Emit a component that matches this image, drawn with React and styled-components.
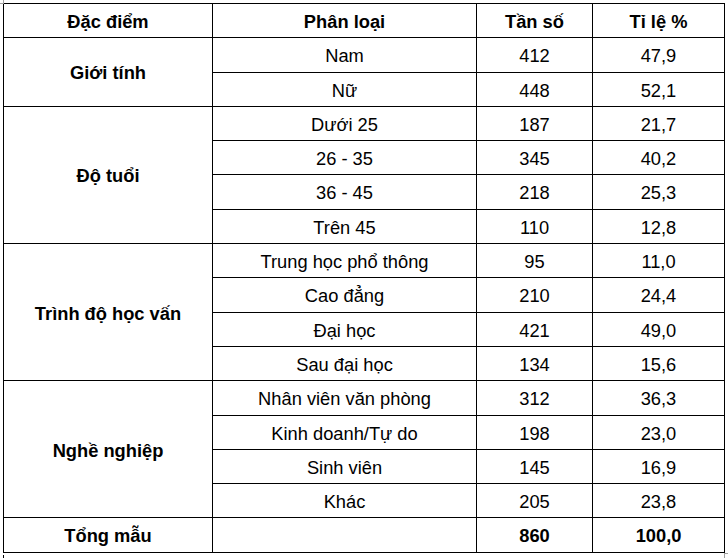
import React from 'react'
import styled, { createGlobalStyle } from 'styled-components'

const GlobalStyle = createGlobalStyle`
  html, body {
    margin: 0;
    padding: 0;
    background: #fff;
  }
`

const groups = [
  {
    name: 'Giới tính',
    items: [
      ['Nam', '412', '47,9'],
      ['Nữ', '448', '52,1'],
    ],
  },
  {
    name: 'Độ tuổi',
    items: [
      ['Dưới 25', '187', '21,7'],
      ['26 - 35', '345', '40,2'],
      ['36 - 45', '218', '25,3'],
      ['Trên 45', '110', '12,8'],
    ],
  },
  {
    name: 'Trình độ học vấn',
    items: [
      ['Trung học phổ thông', '95', '11,0'],
      ['Cao đẳng', '210', '24,4'],
      ['Đại học', '421', '49,0'],
      ['Sau đại học', '134', '15,6'],
    ],
  },
  {
    name: 'Nghề nghiệp',
    items: [
      ['Nhân viên văn phòng', '312', '36,3'],
      ['Kinh doanh/Tự do', '198', '23,0'],
      ['Sinh viên', '145', '16,9'],
      ['Khác', '205', '23,8'],
    ],
  },
]

const Page = styled.div`
  position: relative;
  padding: 3px 0 0 3px;
  width: 728px;
  height: 558px;
  box-sizing: border-box;
  font-family: "Liberation Sans", Arial, sans-serif;
  color: #000;
`

const Handle = styled.span`
  position: absolute;
  width: 4px;
  height: 4px;
  border-color: #a0a0a0;
  border-style: solid;
  border-width: ${p => (p.$end ? '1px 0 0 1px' : '0 1px 1px 0')};
  ${p => (p.$end ? 'left: 724px; top: 553px;' : 'left: -1px; top: -1px;')}
`

const Tick = styled.span`
  position: absolute;
  left: 3px;
  top: 555px;
  width: 1px;
  height: 3px;
  background: #000;
`

const Table = styled.table`
  border-collapse: collapse;
  table-layout: fixed;
  width: 721px;
  font-size: 18.3px;

  col.c1 { width: 209px; }
  col.c2 { width: 264px; }
  col.c3 { width: 116px; }
  col.c4 { width: 132px; }
`

const Cell = styled.td`
  border: 1px solid #000;
  height: 34.3px;
  padding: 3px 0 0;
  box-sizing: border-box;
  text-align: center;
  vertical-align: middle;
  font-weight: ${p => (p.$bold ? 700 : 400)};
  line-height: 1;
`

const HeadCell = styled(Cell).attrs({ as: 'th' })`
  font-weight: 700;
`

const App = () => (
  <Page>
    <GlobalStyle />
    <Handle />
    <Table>
      <colgroup>
        <col className="c1" />
        <col className="c2" />
        <col className="c3" />
        <col className="c4" />
      </colgroup>
      <thead>
        <tr>
          <HeadCell>Đặc điểm</HeadCell>
          <HeadCell>Phân loại</HeadCell>
          <HeadCell>Tần số</HeadCell>
          <HeadCell>Tỉ lệ %</HeadCell>
        </tr>
      </thead>
      <tbody>
        {groups.map(group =>
          group.items.map((item, i) => (
            <tr key={group.name + item[0]}>
              {i === 0 && (
                <Cell $bold rowSpan={group.items.length}>
                  {group.name}
                </Cell>
              )}
              <Cell>{item[0]}</Cell>
              <Cell>{item[1]}</Cell>
              <Cell>{item[2]}</Cell>
            </tr>
          ))
        )}
        <tr>
          <Cell $bold>Tổng mẫu</Cell>
          <Cell />
          <Cell $bold>860</Cell>
          <Cell $bold>100,0</Cell>
        </tr>
      </tbody>
    </Table>
    <Handle $end />
    <Tick />
  </Page>
)

export default App
